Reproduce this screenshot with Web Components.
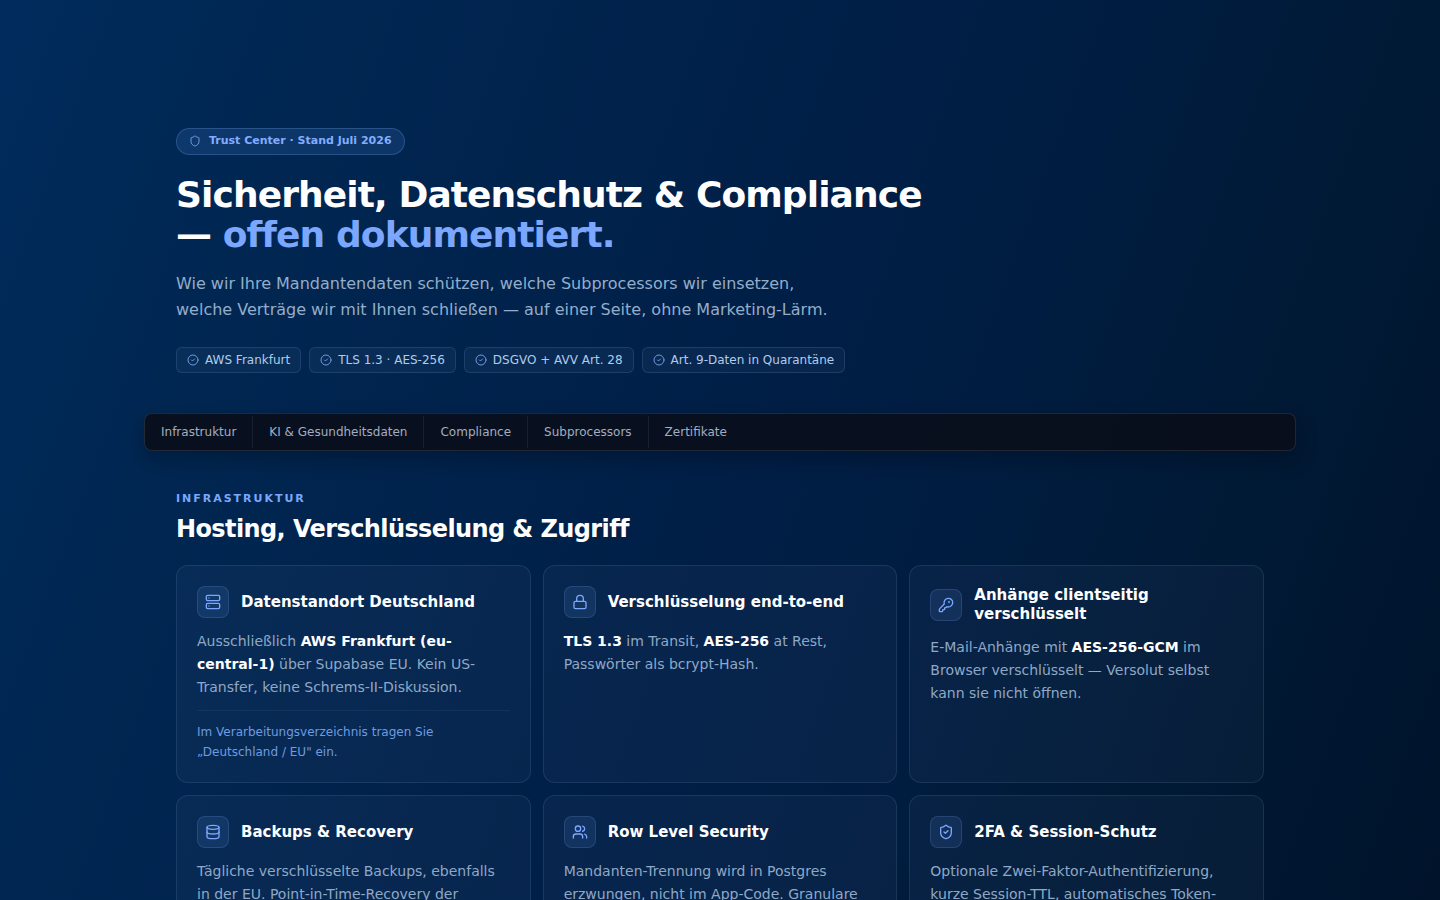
<!DOCTYPE html>
<html lang="de">
<head>
<meta charset="utf-8">
<meta name="viewport" content="width=device-width, initial-scale=1">
<title>Trust Center</title>
<style>
  body {
    margin: 0;
    min-height: 100vh;
    font-family: "DejaVu Sans", sans-serif;
    color: #fff;
    background: linear-gradient(110deg, #002b5c 0%, #002752 18%, #001f47 50%, #001d41 64%, #001a36 80%, #00132b 100%) fixed;
  }
</style>
</head>
<body>
<trust-page>
  <trust-hero>
    <trust-badge slot="badge">Trust Center · Stand Juli 2026</trust-badge>
    <span slot="title">Sicherheit, Datenschutz &amp; Compliance — </span>
    <span slot="accent">offen dokumentiert.</span>
    <span slot="lead">Wie wir Ihre Mandantendaten schützen, welche Subprocessors wir einsetzen, welche Verträge wir mit Ihnen schließen — auf einer Seite, ohne Marketing-Lärm.</span>
    <fact-chip>AWS Frankfurt</fact-chip>
    <fact-chip>TLS 1.3 · AES-256</fact-chip>
    <fact-chip>DSGVO + AVV Art. 28</fact-chip>
    <fact-chip>Art. 9-Daten in Quarantäne</fact-chip>
  </trust-hero>
  <section-nav>
    <nav-item href="#infrastruktur">Infrastruktur</nav-item>
    <nav-item href="#ki">KI &amp; Gesundheitsdaten</nav-item>
    <nav-item href="#compliance">Compliance</nav-item>
    <nav-item href="#subprocessors">Subprocessors</nav-item>
    <nav-item href="#zertifikate">Zertifikate</nav-item>
  </section-nav>
  <trust-section id="infrastruktur">
    <span slot="eyebrow">Infrastruktur</span>
    <span slot="title">Hosting, Verschlüsselung &amp; Zugriff</span>
    <info-card icon="server">
      <span slot="title">Datenstandort Deutschland</span>
      Ausschließlich <strong>AWS Frankfurt (eu-central-1)</strong> über Supabase EU. Kein US-Transfer, keine Schrems-II-Diskussion.
      <card-note slot="note">Im Verarbeitungsverzeichnis tragen Sie „Deutschland / EU" ein.</card-note>
    </info-card>
    <info-card icon="lock">
      <span slot="title">Verschlüsselung end-to-end</span>
      <strong>TLS 1.3</strong> im Transit, <strong>AES-256</strong> at Rest, Passwörter als bcrypt-Hash.
    </info-card>
    <info-card icon="key">
      <span slot="title">Anhänge clientseitig verschlüsselt</span>
      E-Mail-Anhänge mit <strong>AES-256-GCM</strong> im Browser verschlüsselt — Versolut selbst kann sie nicht öffnen.
    </info-card>
    <info-card icon="database">
      <span slot="title">Backups &amp; Recovery</span>
      Tägliche verschlüsselte Backups, ebenfalls in der EU. Point-in-Time-Recovery der
    </info-card>
    <info-card icon="users">
      <span slot="title">Row Level Security</span>
      Mandanten-Trennung wird in Postgres erzwungen, nicht im App-Code. Granulare
    </info-card>
    <info-card icon="shieldCheck">
      <span slot="title">2FA &amp; Session-Schutz</span>
      Optionale Zwei-Faktor-Authentifizierung, kurze Session-TTL, automatisches Token-
    </info-card>
  </trust-section>
</trust-page>

<script>
const SHIELD = '<path d="M20 13c0 5-3.5 7.5-7.66 8.95a1 1 0 0 1-.67-.01C7.5 20.5 4 18 4 13V6a1 1 0 0 1 1-1c2 0 4.500-1.200 6.240-2.720a1.170 1.170 0 0 1 1.520 0C14.510 3.810 17 5 19 5a1 1 0 0 1 1 1z"/>';
const ICONS = {
  shield: SHIELD,
  shieldCheck: SHIELD + '<path d="m9 12 2 2 4-4"/>',
  check: '<circle cx="12" cy="12" r="10"/><path d="m9 12 2 2 4-4"/>',
  server: '<rect x="2" y="2" width="20" height="8" rx="2"/><rect x="2" y="14" width="20" height="8" rx="2"/><path d="M6 6h.01M6 18h.01"/>',
  lock: '<rect x="3" y="11" width="18" height="11" rx="2"/><path d="M7 11V7a5 5 0 0 1 10 0v4"/>',
  key: '<path d="M2.586 17.414A2 2 0 0 0 2 18.828V21a1 1 0 0 0 1 1h3a1 1 0 0 0 1-1v-1a1 1 0 0 1 1-1h1a1 1 0 0 0 1-1v-1a1 1 0 0 1 1-1h.172a2 2 0 0 0 1.414-.586l.814-.814a6.500 6.500 0 1 0-4-4z"/><circle cx="16.500" cy="7.500" r=".5" fill="currentColor"/>',
  database: '<ellipse cx="12" cy="5" rx="9" ry="3"/><path d="M3 5v14a9 3 0 0 0 18 0V5"/><path d="M3 12a9 3 0 0 0 18 0"/>',
  users: '<path d="M16 21v-2a4 4 0 0 0-4-4H6a4 4 0 0 0-4 4v2"/><circle cx="9" cy="7" r="4"/><path d="M22 21v-2a4 4 0 0 0-3-3.870"/><path d="M16 3.130a4 4 0 0 1 0 7.750"/>'
};

const define = (name, render) => customElements.define(name, class extends HTMLElement {
  constructor() {
    super();
    this.attachShadow({ mode: 'open' });
  }
  connectedCallback() {
    this.shadowRoot.innerHTML = render(this);
  }
});

define('line-icon', el => `
  <style>
    :host { display: block; flex: none; width: 16px; height: 16px; }
    svg { display: block; width: 100%; height: 100%; fill: none; stroke: currentColor; stroke-width: 2; stroke-linecap: round; stroke-linejoin: round; }
  </style>
  <svg viewBox="0 0 24 24" aria-hidden="true">${ICONS[el.getAttribute('name')]}</svg>`);

define('trust-page', () => `
  <style>
    :host { display: block; max-width: 1152px; margin: 0 auto; padding-top: 128px; }
  </style>
  <slot></slot>`);

define('trust-badge', () => `
  <style>
    :host {
      display: inline-flex; align-items: center; gap: 8px;
      padding: 4px 12px 5px; border: 1px solid rgba(125, 175, 240, .24); border-radius: 16px;
      background: rgba(90, 150, 240, .15);
      color: #82adff; font-size: 11px; line-height: 16px; font-weight: 700;
    }
    line-icon { width: 12px; height: 12px; opacity: .85; }
  </style>
  <line-icon name="shield"></line-icon><slot></slot>`);

define('trust-hero', () => `
  <style>
    :host { display: block; padding: 0 32px; }
    .badge { display: flex; margin-bottom: 20px; }
    h1 { margin: 0 0 16px; max-width: 768px; font-size: 36px; line-height: 40px; font-weight: 700; letter-spacing: -.025em; }
    em { font-style: normal; color: #7ba7ff; }
    p { margin: 0 0 24px; max-width: 672px; font-size: 16px; line-height: 26px; color: #94adca; }
    .chips { display: flex; flex-wrap: wrap; gap: 8px; }
  </style>
  <div class="badge"><slot name="badge"></slot></div>
  <h1><slot name="title"></slot><em><slot name="accent"></slot></em></h1>
  <p><slot name="lead"></slot></p>
  <div class="chips"><slot></slot></div>`);

define('fact-chip', () => `
  <style>
    :host {
      display: inline-flex; align-items: center; gap: 6px;
      padding: 4px 10px; border: 1px solid rgba(150, 190, 230, .15); border-radius: 6px;
      background: rgba(150, 190, 230, .05);
      color: #b1cbea; font-size: 12px; line-height: 16px;
    }
    line-icon { width: 12px; height: 12px; color: #6f9ae0; }
  </style>
  <line-icon name="check"></line-icon><slot></slot>`);

define('section-nav', () => `
  <style>
    :host { display: block; margin-top: 40px; }
    nav {
      display: flex; padding: 2px 0; border: 1px solid rgba(255, 255, 255, .1); border-radius: 8px;
      background: rgba(9, 13, 24, .85); box-shadow: 0 8px 20px rgba(0, 8, 24, .35);
    }
  </style>
  <nav aria-label="Abschnitte"><slot></slot></nav>`);

define('nav-item', el => `
  <style>
    :host { display: block; border-right: 1px solid rgba(255, 255, 255, .07); }
    :host(:last-of-type) { border-right: 0; }
    a { display: block; padding: 8px 16px; color: #a3adbf; font-size: 12px; line-height: 16px; text-decoration: none; white-space: nowrap; }
    a:hover { color: #fff; }
  </style>
  <a href="${el.getAttribute('href')}"><slot></slot></a>`);

define('trust-section', () => `
  <style>
    :host { display: block; padding: 40px 32px; }
    .eyebrow { margin: 0 0 6px; color: #7ba7ff; font-size: 11px; line-height: 16px; font-weight: 700; letter-spacing: .18em; text-transform: uppercase; }
    h2 { margin: 0 0 20px; font-size: 24px; line-height: 32px; font-weight: 700; letter-spacing: -.025em; }
    .grid { display: grid; grid-template-columns: repeat(3, minmax(0, 1fr)); gap: 12px; }
    @media (max-width: 900px) { .grid { grid-template-columns: minmax(0, 1fr); } }
  </style>
  <p class="eyebrow"><slot name="eyebrow"></slot></p>
  <h2><slot name="title"></slot></h2>
  <div class="grid"><slot></slot></div>`);

define('info-card', el => `
  <style>
    :host {
      display: block; padding: 20px; border: 1px solid rgba(150, 190, 230, .13); border-radius: 12px;
      background: rgba(160, 190, 225, .045);
    }
    header { display: flex; align-items: center; gap: 12px; margin-bottom: 12px; }
    .tile {
      display: grid; place-items: center; flex: none; box-sizing: border-box; width: 32px; height: 32px;
      border: 1px solid rgba(140, 180, 240, .16); border-radius: 8px; background: rgba(100, 155, 240, .12); color: #7ba7ff;
    }
    h3 { margin: 0; font-size: 15px; line-height: 19px; font-weight: 700; }
    .text { font-size: 14px; line-height: 23px; color: #8fa8c6; }
    ::slotted(strong) { color: #fff; font-weight: 700; }
  </style>
  <header>
    <span class="tile"><line-icon name="${el.getAttribute('icon')}"></line-icon></span>
    <h3><slot name="title"></slot></h3>
  </header>
  <div class="text"><slot></slot></div>
  <slot name="note"></slot>`);

define('card-note', () => `
  <style>
    :host {
      display: block; margin-top: 11px; padding-top: 11px; border-top: 1px solid rgba(150, 190, 230, .08);
      color: #6f9be0; font-size: 12px; line-height: 20px;
    }
  </style>
  <slot></slot>`);
</script>
</body>
</html>
